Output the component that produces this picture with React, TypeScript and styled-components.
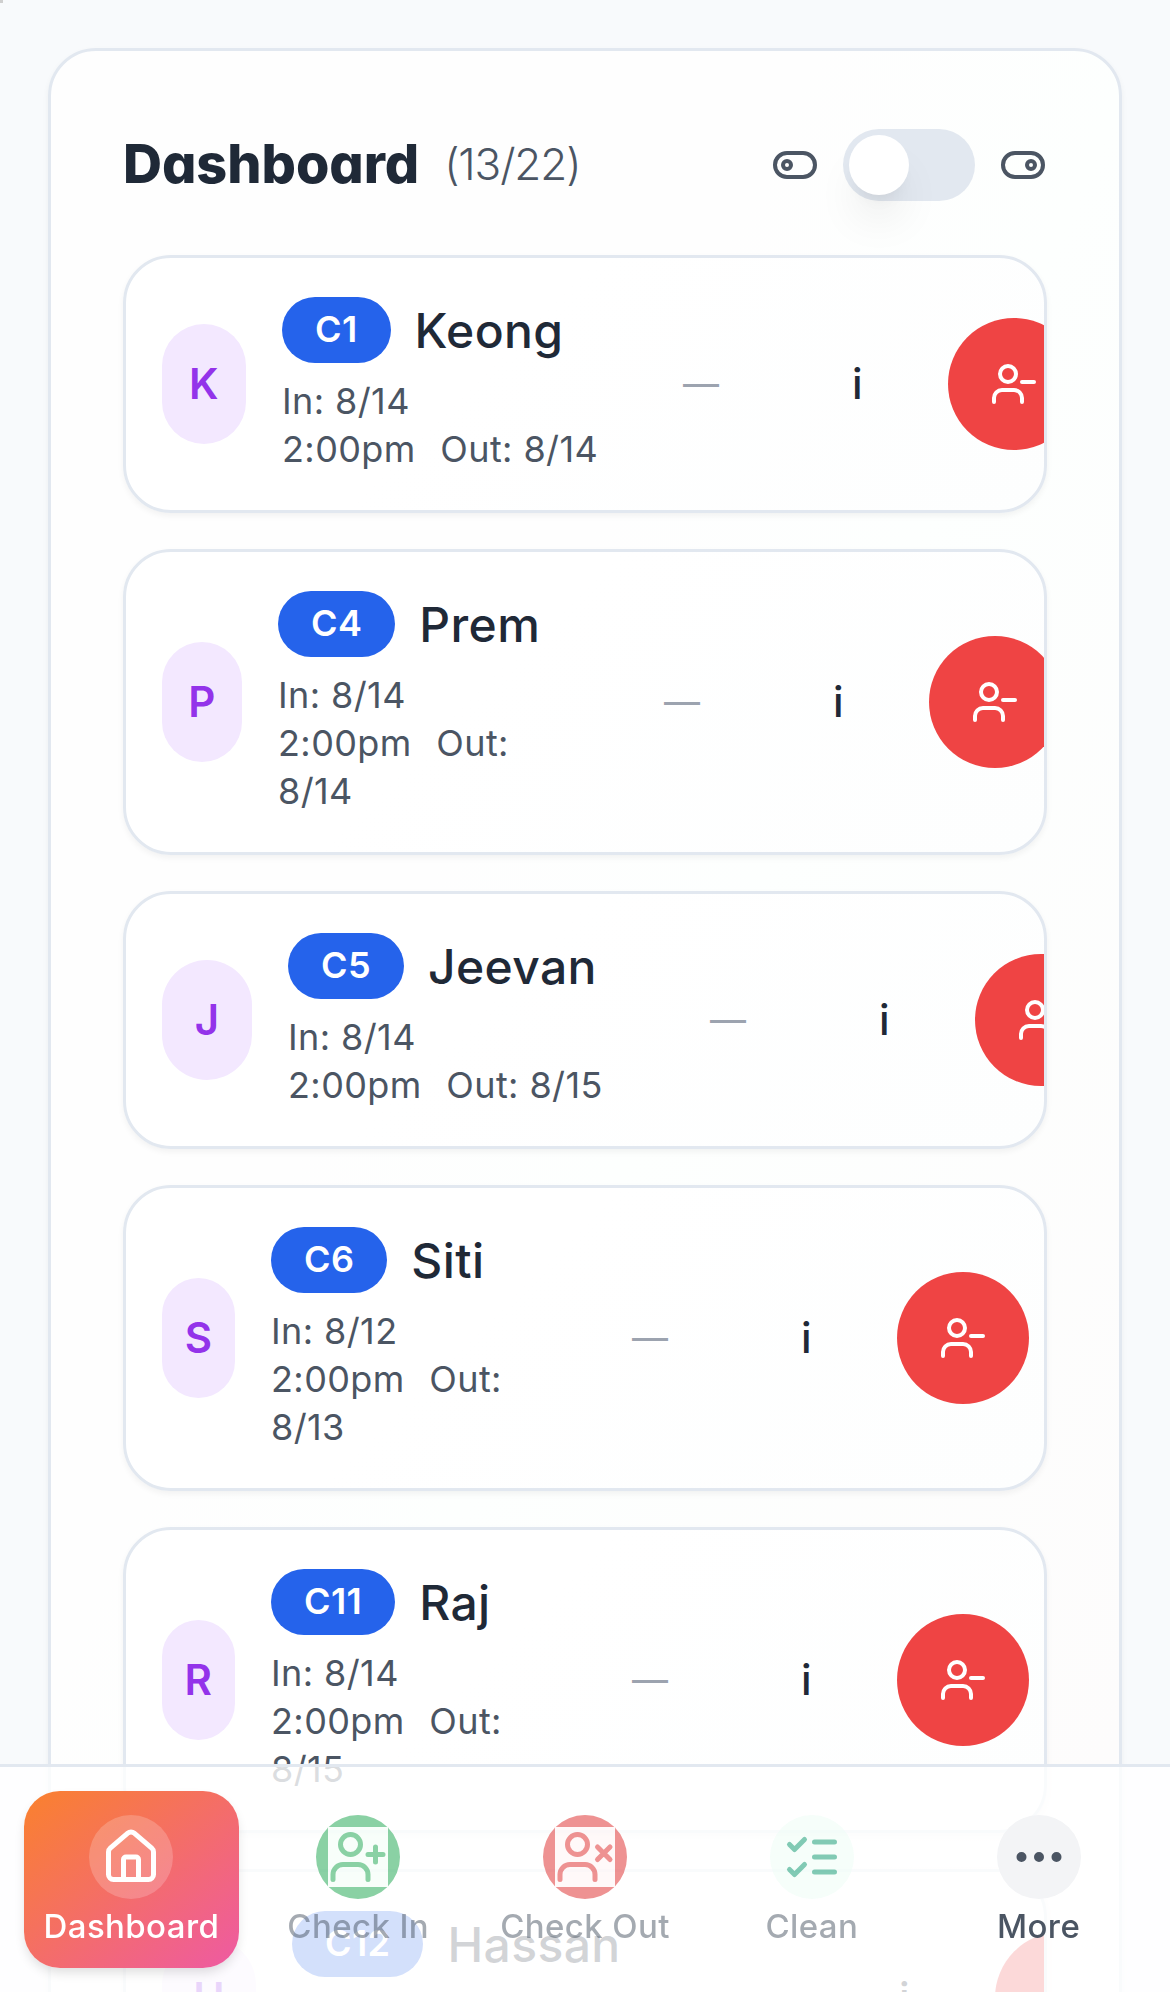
import React from "react";
import styled, { createGlobalStyle, css } from "styled-components";

const Global = createGlobalStyle`
  *, *::before, *::after { box-sizing: border-box; }
  html, body { margin: 0; padding: 0; }
  body {
    height: 1992px;
    overflow: hidden;
    background: #f8fafc;
    color: #1f2937;
    font-family: Inter, "Liberation Sans", sans-serif;
    letter-spacing: 0.025em;
  }
`;

const Page = styled.div`
  height: 1992px;
  overflow: hidden;
  padding: 48px;
`;

const Marker = styled.span`
  position: absolute;
  top: 0;
  left: 0;
  width: 3px;
  height: 3px;
  background: #cfcfcf;
`;

const Panel = styled.section`
  display: flex;
  flex-direction: column;
  gap: 48px;
  height: 2400px;
  padding: 72px;
  border: 3px solid #e2e8f0;
  border-radius: 48px;
  background: linear-gradient(115deg, #fefefe 0%, #fefefe 35%, #fdfffe 50%, #fdfcfc 85%);
  box-shadow: 0 3px 6px rgba(0, 0, 0, 0.05);
`;

const Header = styled.header`
  display: flex;
  align-items: center;
  justify-content: space-between;
  height: 84px;
`;

const Title = styled.h1`
  display: flex;
  align-items: center;
  gap: 25px;
  margin: 0;
  padding-bottom: 2px;
  font-size: 54px;
  line-height: 72px;
  font-weight: 800;
  letter-spacing: -0.001em;
  font-feature-settings: "cv11";
`;

const Count = styled.span`
  color: #4b5563;
  font-size: 44px;
  font-weight: 350;
  letter-spacing: -0.025em;
`;

const ViewSwitch = styled.div`
  display: flex;
  align-items: center;
  gap: 24px;
  color: #4b5563;
`;

const Track = styled.button`
  display: flex;
  width: 132px;
  height: 72px;
  padding: 6px;
  border: 0;
  border-radius: 36px;
  background: #e2e8f0;
`;

const Thumb = styled.span`
  width: 60px;
  height: 60px;
  border-radius: 50%;
  background: #fff;
  box-shadow: 0 30px 45px -9px rgba(0, 0, 0, 0.1), 0 12px 18px -12px rgba(0, 0, 0, 0.1);
`;

const List = styled.div`
  display: flex;
  flex-direction: column;
  gap: 36px;
`;

const Card = styled.article<{ $tall?: boolean }>`
  display: flex;
  align-items: center;
  gap: 36px;
  height: ${(p) => (p.$tall ? 306 : 258)}px;
  padding: 36px;
  border: 3px solid #e2e8f0;
  border-radius: 48px;
  background: linear-gradient(135deg, #fff 40%, #fdfefe);
  box-shadow: 0 3px 6px rgba(0, 0, 0, 0.05);
  overflow: hidden;
`;

const Avatar = styled.div<{ $w: number }>`
  display: flex;
  flex: none;
  align-items: center;
  justify-content: center;
  width: ${(p) => p.$w}px;
  height: 120px;
  padding-bottom: 2px;
  border-radius: 60px;
  background: #f3e8ff;
  color: #9333ea;
  font-size: 42px;
  font-weight: 600;
`;

const Details = styled.div<{ $w: number }>`
  flex: none;
  width: ${(p) => p.$w}px;
`;

const NameRow = styled.div`
  display: flex;
  align-items: center;
  gap: 24px;
  height: 72px;
  margin-bottom: 11px;
  white-space: nowrap;
`;

const Badge = styled.span`
  height: 66px;
  padding: 8px 33px 10px;
  border-radius: 33px;
  background: #2563eb;
  color: #fff;
  font-size: 36px;
  line-height: 48px;
  font-weight: 600;
`;

const Name = styled.span`
  padding-top: 2px;
  font-size: 48px;
  line-height: 72px;
  font-weight: 500;
`;

const Stay = styled.div`
  margin-bottom: 1px;
  color: #4b5563;
  font-size: 36px;
  line-height: 48px;
  white-space: nowrap;
`;

const Out = styled.span`
  margin-left: 14px;
`;

const Dash = styled.span`
  flex: none;
  width: 134px;
  padding-left: 1px;
  color: #9ca3af;
  font-size: 36px;
`;

const Info = styled.span`
  flex: none;
  width: 60px;
  padding-bottom: 1px;
  font-size: 42px;
  font-weight: 500;
`;

const Remove = styled.button`
  display: flex;
  flex: none;
  align-items: center;
  justify-content: center;
  width: 132px;
  height: 132px;
  padding: 0;
  border: 0;
  border-radius: 50%;
  background: #ef4444;
  color: #fff;
`;

const Nav = styled.nav`
  position: fixed;
  left: 0;
  right: 0;
  bottom: 0;
  display: grid;
  grid-template-columns: repeat(5, 1fr);
  gap: 12px;
  height: 228px;
  padding: 24px;
  border-top: 3px solid #e2e8f0;
  background: rgba(255, 255, 255, 0.8);
`;

const Item = styled.a<{ $active?: boolean; $muted?: boolean }>`
  display: flex;
  flex-direction: column;
  align-items: center;
  gap: 6px;
  height: 177px;
  padding-top: 24px;
  border-radius: 36px;
  color: #4b5563;
  opacity: ${(p) => (p.$muted ? 0.5 : 1)};
  ${(p) =>
    p.$active &&
    css`
      color: #fff;
      background: linear-gradient(to bottom right, #fa812d, #ee5aa3);
      box-shadow: 0 6px 12px -2px rgba(0, 0, 0, 0.14);
    `}
`;

const Disc = styled.span<{ $bg: string; $fg: string; $inner?: string }>`
  display: flex;
  align-items: center;
  justify-content: center;
  width: 84px;
  height: 84px;
  border-radius: 50%;
  background: ${(p) => p.$bg};
  color: ${(p) => p.$fg};
  svg { background: ${(p) => p.$inner || "transparent"}; }
`;

const Label = styled.span`
  font-size: 33px;
  line-height: 42px;
  font-weight: 500;
  white-space: nowrap;
`;

const Glyph = ({ size = 48, children }: { size?: number; children: React.ReactNode }) => (
  <svg width={size} height={size} viewBox="0 0 24 24" fill="none" stroke="currentColor" strokeWidth="2" strokeLinecap="round" strokeLinejoin="round">
    {children}
  </svg>
);

const Person = () => (
  <>
    <path d="M16 21v-2a4 4 0 0 0-4-4H6a4 4 0 0 0-4 4v2" />
    <circle cx="9" cy="7" r="4" />
  </>
);

type Guest = { unit: string; name: string; from: string; out: string; wrap?: boolean; avatar: number; details: number };

const guests: Guest[] = [
  { unit: "C1", name: "Keong", from: "8/14", out: "8/14", avatar: 84, details: 364 },
  { unit: "C4", name: "Prem", from: "8/14", out: "8/14", wrap: true, avatar: 80, details: 349 },
  { unit: "C5", name: "Jeevan", from: "8/14", out: "8/15", avatar: 90, details: 385 },
  { unit: "C6", name: "Siti", from: "8/12", out: "8/13", wrap: true, avatar: 73, details: 324 },
  { unit: "C11", name: "Raj", from: "8/14", out: "8/15", wrap: true, avatar: 73, details: 324 },
  { unit: "C12", name: "Hassan", from: "8/14", out: "8/15", avatar: 94, details: 401 },
];

const GuestCard = ({ g }: { g: Guest }) => (
  <Card $tall={g.wrap}>
    <Avatar $w={g.avatar}>{g.name[0]}</Avatar>
    <Details $w={g.details}>
      <NameRow>
        <Badge>{g.unit}</Badge>
        <Name>{g.name}</Name>
      </NameRow>
      <Stay>
        In: {g.from}
        <br />
        2:00pm <Out>Out:{g.wrap ? <br /> : " "}{g.out}</Out>
      </Stay>
    </Details>
    <Dash>—</Dash>
    <Info>i</Info>
    <Remove>
      <Glyph>
        <Person />
        <path d="M22 11h-6" />
      </Glyph>
    </Remove>
  </Card>
);

export default function App() {
  return (
    <>
      <Global />
      <Page>
        <Marker />
        <Panel>
          <Header>
            <Title>
              Dashboard <Count>(13/22)</Count>
            </Title>
            <ViewSwitch>
              <Glyph>
                <rect x="2" y="6" width="20" height="12" rx="6" />
                <circle cx="8" cy="12" r="2" />
              </Glyph>
              <Track>
                <Thumb />
              </Track>
              <Glyph>
                <rect x="2" y="6" width="20" height="12" rx="6" />
                <circle cx="16" cy="12" r="2" />
              </Glyph>
            </ViewSwitch>
          </Header>
          <List>
            {guests.map((g) => (
              <GuestCard key={g.unit} g={g} />
            ))}
          </List>
        </Panel>
      </Page>
      <Nav>
        <Item $active>
          <Disc $bg="rgba(255,255,255,0.2)" $fg="#fff">
            <Glyph size={60}>
              <path d="M15 21v-8a1 1 0 0 0-1-1h-4a1 1 0 0 0-1 1v8" />
              <path d="M3 10a2 2 0 0 1 .709-1.528l7-5.999a2 2 0 0 1 2.582 0l7 5.999A2 2 0 0 1 21 10v9a2 2 0 0 1-2 2H5a2 2 0 0 1-2-2z" />
            </Glyph>
          </Disc>
          <Label>Dashboard</Label>
        </Item>
        <Item $muted>
          <Disc $bg="#16a34a" $fg="#16a34a" $inner="#f0fdf4">
            <Glyph size={60}>
              <Person />
              <path d="M19 8v6M22 11h-6" />
            </Glyph>
          </Disc>
          <Label>Check In</Label>
        </Item>
        <Item $muted>
          <Disc $bg="#dc2626" $fg="#dc2626" $inner="#fef2f2">
            <Glyph size={60}>
              <Person />
              <path d="m17 8 5 5M22 8l-5 5" />
            </Glyph>
          </Disc>
          <Label>Check Out</Label>
        </Item>
        <Item $muted>
          <Disc $bg="#ecfdf5" $fg="#059669">
            <Glyph size={60}>
              <path d="m3 17 2 2 4-4M3 7l2 2 4-4M13 6h8M13 12h8M13 18h8" />
            </Glyph>
          </Disc>
          <Label>Clean</Label>
        </Item>
        <Item>
          <Disc $bg="#f3f4f6" $fg="#4b5563">
            <Glyph size={60}>
              <circle cx="12" cy="12" r="1" />
              <circle cx="19" cy="12" r="1" />
              <circle cx="5" cy="12" r="1" />
            </Glyph>
          </Disc>
          <Label>More</Label>
        </Item>
      </Nav>
    </>
  );
}
